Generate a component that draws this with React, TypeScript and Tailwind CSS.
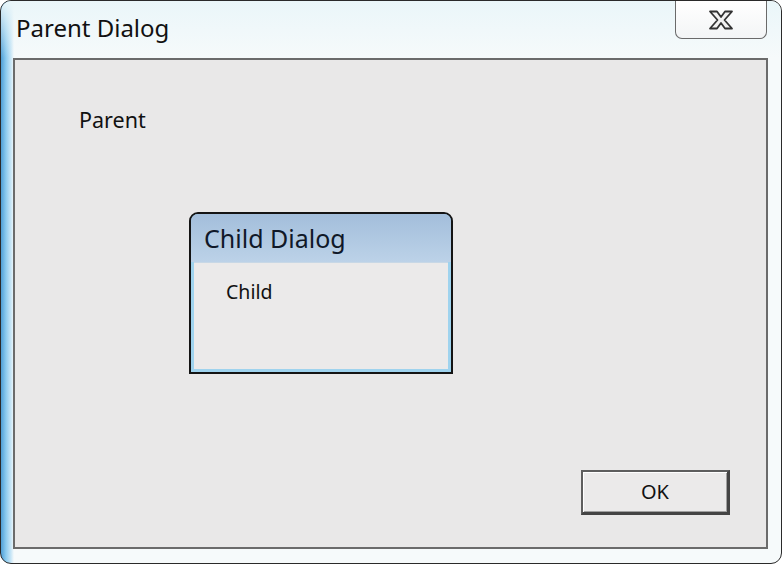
import React from "react";

const ui = { fontFamily: '"Noto Sans", "Open Sans", Arial, sans-serif' };

function CloseGlyph() {
  return (
    <svg width="28" height="22" viewBox="0 0 28 22" aria-hidden>
      <path
        d="M3 2.5 H10 L14 8 L18 2.5 H25 L17.5 11 L25 19.5 H18 L14 14 L10 19.5 H3 L10.5 11 Z"
        fill="#f2f2f2"
        stroke="#333"
        strokeWidth="1.8"
        strokeLinejoin="round"
      />
    </svg>
  );
}

function ChildDialog() {
  return (
    <div className="w-[264px] h-[162px] flex flex-col rounded-t-[9px] border-2 border-[#141414] bg-[#9fd3ee] overflow-hidden">
      <div className="h-[48px] flex items-center pl-[13px] bg-[linear-gradient(to_bottom,#a3bedb,#bcd2e8)]">
        <span className="text-[25px] text-[#101828] leading-none pt-[2px]" style={ui}>
          Child Dialog
        </span>
      </div>
      <div className="flex-1 mx-[3px] mb-[3px] bg-[#ebeaea] border-t border-[#c8d8e6] pl-[32px] pt-[18px]">
        <span className="text-[19.5px] text-[#111] leading-none" style={ui}>
          Child
        </span>
      </div>
    </div>
  );
}

export default function App() {
  return (
    <div className="w-[782px] h-[564px] bg-white overflow-hidden">
      <div className="w-[782px] h-[564px] flex flex-col rounded-[11px] border border-[#2a2a2a] bg-[linear-gradient(to_right,#4f9fd6_0px,#8ccbef_5px,#c9e6f6_10px,#f6fafb_13px)]">
        {/* title bar */}
        <div className="h-[57px] flex items-start bg-[linear-gradient(to_bottom,#eaf6f9,transparent)] rounded-t-[10px]">
          <span className="pl-[15px] pt-[15px] text-[24px] leading-none text-[#111]" style={ui}>
            Parent Dialog
          </span>
          <div className="ml-auto mr-[14px] w-[92px] h-[38px] flex items-center justify-center rounded-b-[7px] border border-t-0 border-[#6a6a6a] bg-[linear-gradient(to_bottom,#ffffff,#f3f5f6)]">
            <CloseGlyph />
          </div>
        </div>

        {/* client area */}
        <div className="flex-1 ml-[12px] mr-[13px] mb-[14px] flex flex-col border-2 border-[#6b6b6b] bg-[#e9e8e8]">
          <span className="ml-[64px] mt-[49px] text-[21.5px] leading-none text-[#111]" style={ui}>
            Parent
          </span>
          <div className="ml-[174px] mt-[81px]">
            <ChildDialog />
          </div>
          <div className="mt-auto mb-[32px] mr-[36px] self-end">
            <button
              className="w-[149px] h-[45px] flex items-center justify-center border-2 border-[#5e5e5e] border-r-[3px] border-b-[3px] border-r-[#444] border-b-[#444] bg-[#ebeaea] shadow-[inset_1px_1px_0_#fff,inset_-1px_-1px_0_#a0a0a0]"
              style={ui}
            >
              <span className="text-[20px] leading-none text-[#111]">OK</span>
            </button>
          </div>
        </div>
      </div>
    </div>
  );
}
